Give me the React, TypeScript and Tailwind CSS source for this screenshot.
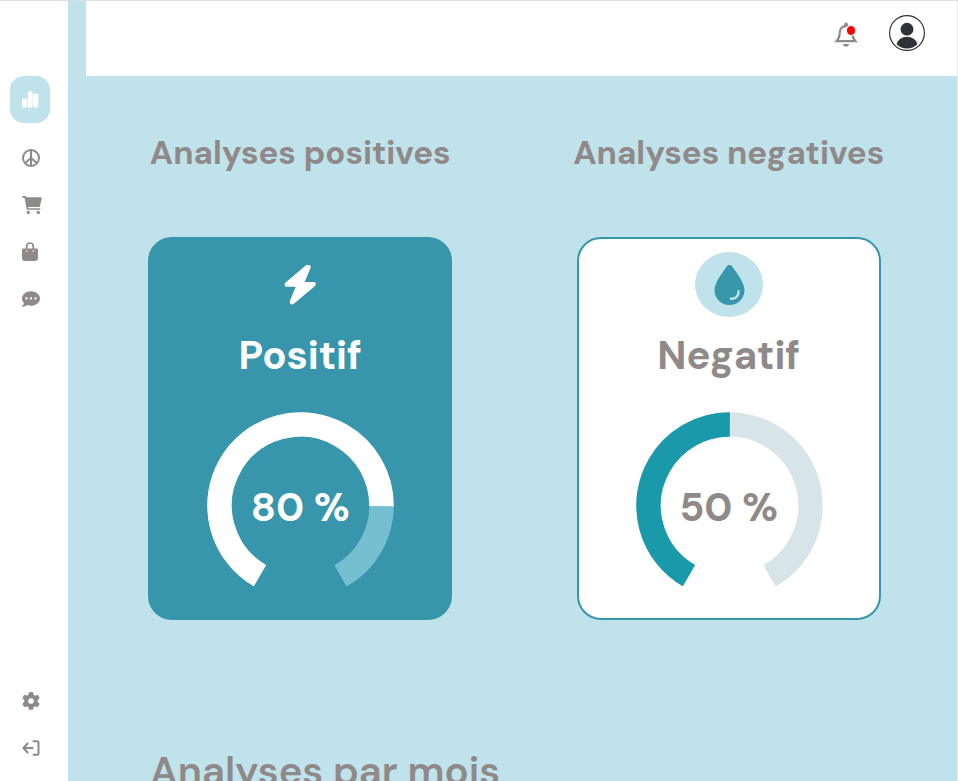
import type { ReactNode } from "react";
import { FaCommentDots } from "react-icons/fa";
import { FaGear } from "react-icons/fa6";

function BarsIcon() {
  return (
    <svg width="18" height="18" viewBox="0 0 18 18" fill="currentColor">
      <rect x="0" y="7.3" width="5" height="9.4" rx="1.8" />
      <rect x="5.7" y="0.3" width="5" height="16.4" rx="1.8" />
      <rect x="11.2" y="2.6" width="5" height="14.1" rx="1.8" />
    </svg>
  );
}

function PeaceIcon() {
  return (
    <svg width="18" height="18" viewBox="0 0 18 18" fill="none" stroke="currentColor" strokeWidth="2">
      <circle cx="9" cy="9" r="8" />
      <path d="M9 1v16M9 9l-5.8 5M9 9l5.8 5" />
    </svg>
  );
}

function CartIcon() {
  return (
    <svg width="20" height="20" viewBox="0 0 20 20" fill="none" stroke="currentColor" strokeLinecap="round" strokeLinejoin="round">
      <path d="M0.8 1.8h2.4L5.6 14h12" strokeWidth="1.7" />
      <path d="M4 2.9h15.2l-1.9 8.5H5.6z" fill="currentColor" strokeWidth="1.2" />
      <circle cx="6.3" cy="17.4" r="1.7" fill="currentColor" stroke="none" />
      <circle cx="16.3" cy="17.4" r="1.7" fill="currentColor" stroke="none" />
    </svg>
  );
}

function BagIcon() {
  return (
    <svg width="16" height="19" viewBox="0 -1 16 19" fill="none">
      <path d="M4.7 7.5V3.300a3.3 3.3 0 0 1 6.600 0v4.200" stroke="currentColor" strokeWidth="1.7" />
      <path
        fill="currentColor"
        fillRule="evenodd"
        d="M1.4 5.500h13.2c.8 0 1.4.6 1.400 1.300V15c0 2-1.2 3-3 3H3c-1.8 0-3-1-3-3V6.800C0 6.100.6 5.500 1.400 5.500zM4.7 6.900a.9.9 0 1 0 0 1.8.9.9 0 0 0 0-1.8zm6.6 0a.9.9 0 1 0 0 1.8.9.9 0 0 0 0-1.8z"
      />
    </svg>
  );
}

function LogoutIcon() {
  return (
    <svg width="18" height="16" viewBox="0 0 18 16" fill="none" stroke="currentColor" strokeWidth="2" strokeLinecap="round" strokeLinejoin="round">
      <path d="M5.6 3.5L1.4 8l4.2 4.5M1.6 8h9" />
      <path d="M11.5 1.2H15c1 0 1.5.5 1.5 1.5v10.6c0 1-.5 1.5-1.5 1.5h-3.5" />
    </svg>
  );
}

function BellIcon() {
  return (
    <svg width="24" height="26" viewBox="0 0 24 26" fill="none">
      <circle cx="12" cy="3.6" r="2" fill="#8f8a89" />
      <path
        d="M2.6 20.2h18.8c-2.1-2.2-3-4.6-3-7.4 0-4.9-2.2-7.7-6.4-7.7s-6.4 2.8-6.4 7.7c0 2.8-.9 5.2-3 7.4z"
        stroke="#8f8a89"
        strokeWidth="2.2"
        strokeLinejoin="miter"
      />
      <path d="M8.8 23h6.4c-.5 1.8-1.600 2.800-3.200 2.800s-2.700-1-3.200-2.800z" fill="#8f8a89" />
      <circle cx="17" cy="9.5" r="5.6" fill="#fff" />
      <ellipse cx="17" cy="9.5" rx="4.1" ry="4.6" fill="#ff0000" />
    </svg>
  );
}

function AvatarIcon() {
  return (
    <svg width="36" height="36" viewBox="0 0 36 36">
      <circle cx="18" cy="18" r="17.4" fill="#fff" stroke="#303237" strokeWidth="1.2" />
      <circle cx="18" cy="14.2" r="6.4" fill="#303237" />
      <path d="M7.6 29.2c1.3-4.6 5.4-7.4 10.4-7.4s9.1 2.8 10.4 7.4C25.7 32 22.1 33.5 18 33.5S10.300 32 7.600 29.200z" fill="#303237" />
    </svg>
  );
}

function BoltIcon() {
  return (
    <svg width="32" height="40" viewBox="-0.5 0.5 32 40" fill="currentColor">
      <path d="M21.8.6 1.4 17.7C-.8 19.7 0 22.3 2.6 22.3h8.6L5.4 36.6c-.9 2.5 1.700 4.400 3.900 2.700L30.200 21.700c2.100-1.900 1.200-4.300-1.300-4.300h-8.700l5.700-13.700C27 .8 24.300-1.200 21.800.6z" />
    </svg>
  );
}

function DropIcon() {
  return (
    <svg width="32" height="40" viewBox="-1.5 0 32 40">
      <path d="M12.7 1.1c1.1-1.5 3.5-1.5 4.6 0C23 9 30 18 30 25.2 30 33.5 23.3 40 15 40S0 33.5 0 25.2C0 18 7 9 12.700 1.100z" fill="#3796ab" />
      <path d="M16.4 33.8c5 0 7.7-2.6 7.7-7.5" fill="none" stroke="#c0e2ea" strokeWidth="2.4" strokeLinecap="round" />
    </svg>
  );
}

function NavButton({ label, children }: { label: string; children: ReactNode }) {
  return (
    <button type="button" aria-label={label} className="flex h-[47px] w-10 items-center pl-3">
      {children}
    </button>
  );
}

const RADIUS = 81;
const ARC = (2 * Math.PI * RADIUS * 5) / 6;

type GaugeProps = { value: number; filled: number; color: string; track: string };

function Gauge({ value, filled, color, track }: GaugeProps) {
  const circumference = 2 * Math.PI * RADIUS;
  return (
    <div className="grid size-[188px] place-items-center">
      <svg className="col-start-1 row-start-1" width="188" height="188" viewBox="0 0 188 188" fill="none" strokeWidth="24.5">
        <g transform="translate(0.5 0.5) rotate(120 94 94)">
          <circle cx="94" cy="94" r={RADIUS} stroke={track} strokeDasharray={`${ARC} ${circumference}`} />
          <circle cx="94" cy="94" r={RADIUS} stroke={color} strokeDasharray={`${ARC * filled} ${circumference}`} />
        </g>
      </svg>
      <span className="col-start-1 row-start-1 pt-1 text-[40px] leading-[48px] font-bold">{value} %</span>
    </div>
  );
}

type CardProps = {
  heading: string;
  name: string;
  icon: ReactNode;
  cardClass: string;
  gauge: GaugeProps;
};

function AnalysisCard({ heading, name, icon, cardClass, gauge }: CardProps) {
  return (
    <section className="flex flex-col items-center">
      <h2 className="text-[33px] leading-10 font-bold whitespace-nowrap">{heading}</h2>
      <div className={`mt-16 flex h-[383px] w-[304px] flex-col items-center rounded-3xl border-2 pt-[13px] ${cardClass}`}>
        {icon}
        <h3 className="mt-[15px] text-[40px] leading-[47px] font-bold">{name}</h3>
        <div className="mt-8">
          <Gauge {...gauge} />
        </div>
      </div>
    </section>
  );
}

export default function App() {
  return (
    <div className="flex h-screen overflow-hidden border-t border-[#dedede] bg-[#c0e2ea] font-['DM_Sans',Inter,sans-serif] text-[#8f8a89]">
      <aside className="flex w-[68px] shrink-0 flex-col bg-white px-[10px] pt-[75px] pb-[10px]">
        <nav className="flex flex-col" aria-label="Menu principal">
          <button
            type="button"
            aria-label="Analyses"
            className="mb-[11px] flex h-[47px] w-10 items-center rounded-[14px] bg-[#c0e2ea] pl-3 text-white"
          >
            <BarsIcon />
          </button>
          <NavButton label="Paix"><PeaceIcon /></NavButton>
          <NavButton label="Panier"><CartIcon /></NavButton>
          <NavButton label="Boutique"><BagIcon /></NavButton>
          <NavButton label="Messages"><FaCommentDots size={18} /></NavButton>
        </nav>
        <div className="mt-auto flex flex-col">
          <NavButton label="Paramètres"><FaGear size={18} /></NavButton>
          <NavButton label="Déconnexion"><LogoutIcon /></NavButton>
        </div>
      </aside>

      <div className="ml-[18px] flex min-w-0 flex-1 flex-col border-r border-[#ececec]">
        <header className="flex h-[75px] shrink-0 items-start justify-end gap-[31px] bg-white pt-[14px] pr-8">
          <button type="button" aria-label="Notifications" className="mt-[6px]">
            <BellIcon />
          </button>
          <button type="button" aria-label="Profil">
            <AvatarIcon />
          </button>
        </header>

        <main className="min-h-0 flex-1 overflow-y-auto pt-[57px] [scrollbar-width:none]">
          <div className="grid grid-cols-2 pr-[14px]">
            <AnalysisCard
              heading="Analyses positives"
              name="Positif"
              cardClass="border-[#3796ab] bg-[#3796ab] text-white"
              icon={<div className="flex h-[65px] w-[68px] items-center justify-center"><BoltIcon /></div>}
              gauge={{ value: 80, filled: 0.8, color: "#ffffff", track: "#74c0d0" }}
            />
            <AnalysisCard
              heading="Analyses negatives"
              name="Negatif"
              cardClass="border-[#3796ab] bg-white"
              icon={<div className="flex h-[65px] w-[68px] items-center justify-center rounded-[50%] bg-[#c0e2ea]"><DropIcon /></div>}
              gauge={{ value: 50, filled: 0.5, color: "#1a99ab", track: "#d7e5e8" }}
            />
          </div>
          <h2 className="mt-[127px] ml-16 text-[40px] leading-[48px] font-semibold whitespace-nowrap">Analyses par mois</h2>
        </main>
      </div>
    </div>
  );
}
